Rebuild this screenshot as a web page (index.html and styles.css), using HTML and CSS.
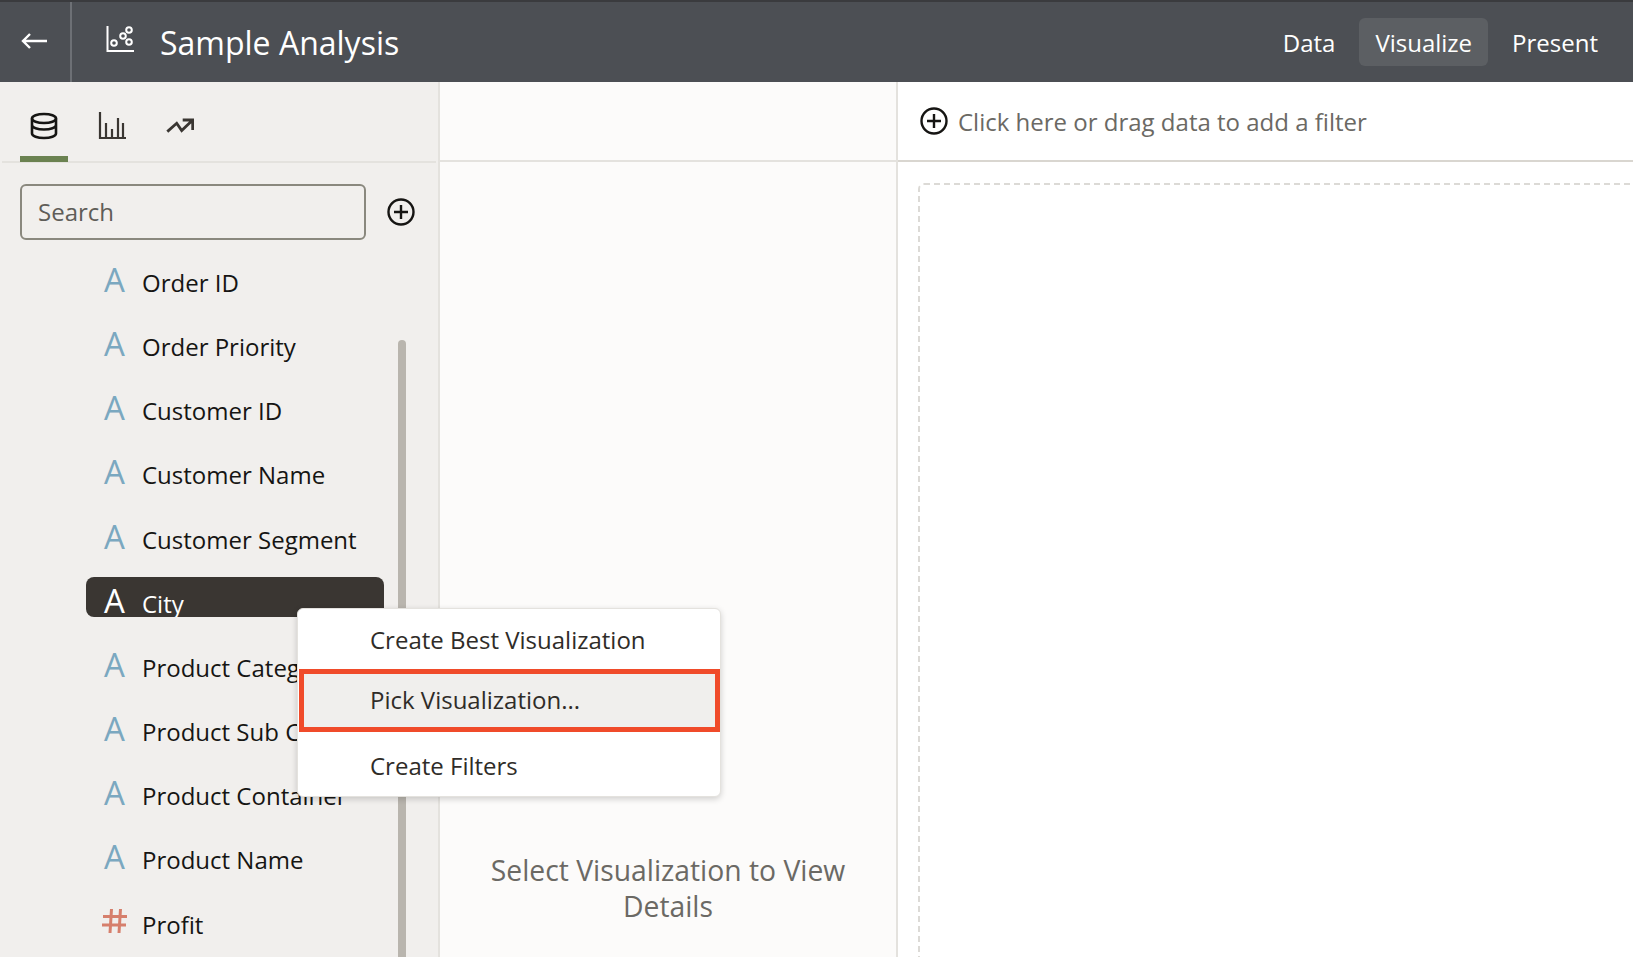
FILE: index.html
```html
<!DOCTYPE html>
<html lang="en">
<head>
  <meta charset="UTF-8" />
  <title>Sample Analysis</title>
  <link rel="stylesheet" href="styles.css">
</head>
<body>

  <header class="topbar">
    <button class="back" aria-label="Back">
      <svg width="28" height="20" viewBox="0 0 28 20" fill="none" stroke="#fff" stroke-width="2.4">
        <path d="M27 10H3M10 3l-7 7 7 7"/>
      </svg>
    </button>
    <svg class="title-icon" width="30" height="28" viewBox="0 0 30 28" fill="none" stroke="#fff" stroke-width="2">
      <path d="M1.500 0v25H28"/>
      <circle cx="8" cy="17" r="2.800"/>
      <circle cx="17" cy="10" r="2.800"/>
      <circle cx="23" cy="4" r="2.800"/>
      <circle cx="23" cy="16" r="2.800"/>
    </svg>
    <h1>Sample Analysis</h1>
    <nav class="modes">
      <a>Data</a>
      <a class="active">Visualize</a>
      <a>Present</a>
    </nav>
  </header>

  <main class="workspace">
    <aside class="sidebar">
      <div class="tabs">
        <div class="tab active">
          <svg width="28" height="28" viewBox="0 0 28 28" fill="none" stroke="#161513" stroke-width="2.600">
            <ellipse cx="14" cy="6.500" rx="12" ry="4.500"/>
            <path d="M2 6.500v15c0 2.600 5.400 4.500 12 4.500s12-1.900 12-4.500v-15M2 13c0 2.600 5.400 4.500 12 4.500s12-1.900 12-4.500"/>
          </svg>
        </div>
        <div class="tab">
          <svg width="28" height="28" viewBox="0 0 28 28" fill="none" stroke="#3a3632" stroke-width="2.200">
            <path d="M2 0v26h26M8 26V11M14 26V17M20 26V6M25 26V11"/>
          </svg>
        </div>
        <div class="tab">
          <svg width="28" height="28" viewBox="0 0 28 28" fill="none" stroke="#3a3632" stroke-width="2.800">
            <path d="M1.300 19.600l9.400-8.300 5 7.300L26.700 8M16.700 8h10v10"/>
          </svg>
        </div>
      </div>

      <div class="search-row">
        <div class="search">Search</div>
        <svg class="plus" width="28" height="28" viewBox="0 0 28 28" fill="none" stroke="#161513" stroke-width="2.400">
          <circle cx="14" cy="14" r="12.500"/>
          <path d="M14 7v14M7 14h14"/>
        </svg>
      </div>

      <ul class="fields">
        <li><span class="type">A</span><span class="name">Order ID</span></li>
        <li><span class="type">A</span><span class="name">Order Priority</span></li>
        <li><span class="type">A</span><span class="name">Customer ID</span></li>
        <li><span class="type">A</span><span class="name">Customer Name</span></li>
        <li><span class="type">A</span><span class="name">Customer Segment</span></li>
        <li class="selected"><span class="type">A</span><span class="name">City</span></li>
        <li><span class="type">A</span><span class="name">Product Category</span></li>
        <li><span class="type">A</span><span class="name">Product Sub Category</span></li>
        <li><span class="type">A</span><span class="name">Product Container</span></li>
        <li><span class="type">A</span><span class="name">Product Name</span></li>
        <li>
          <svg class="type-hash" width="25" height="26" viewBox="0 0 25 26" fill="none" stroke="#d67f6c" stroke-width="3">
            <path d="M9.500 1L8 25M18.500 1L17 25M1 8.500h24M0 17h24"/>
          </svg>
          <span class="name">Profit</span>
        </li>
      </ul>
      <div class="scrollbar"></div>
    </aside>

    <section class="details">
      <div class="details-head"></div>
      <p class="details-hint">Select Visualization to View Details</p>
    </section>

    <section class="canvas">
      <div class="filterbar">
        <svg width="28" height="28" viewBox="0 0 28 28" fill="none" stroke="#161513" stroke-width="2.400">
          <circle cx="14" cy="14" r="12.500"/>
          <path d="M14 7v14M7 14h14"/>
        </svg>
        <span>Click here or drag data to add a filter</span>
      </div>
      <div class="dropzone"></div>
    </section>

    <div class="menu">
      <div class="menu-item">Create Best Visualization</div>
      <div class="menu-item picked">Pick Visualization...</div>
      <div class="menu-item">Create Filters</div>
    </div>
  </main>

</body>
</html>
```

FILE: styles.css
```css
* {
  box-sizing: border-box;
}
html, body {
  height: 100%;
}
body {
  margin: 0;
  overflow: hidden;
  display: flex;
  flex-direction: column;
  font-family: "Open Sans", "Noto Sans", sans-serif;
  color: #161513;
  background: #fff;
}
.topbar {
  flex: none;
  height: 82px;
  display: flex;
  align-items: center;
  background: #4c4f54;
  border-top: 2px solid #3a3b3e;
  color: #fff;
}
.back {
  width: 72px;
  height: 100%;
  padding: 0 0 2px 20px;
  display: flex;
  align-items: center;
  background: none;
  border: none;
  border-right: 2px solid #6d7075;
}
.title-icon {
  margin: 0 0 4px 34px;
}
.topbar h1 {
  margin: 0 0 0 24px;
  font-size: 32px;
  font-weight: 400;
}
.modes {
  margin-left: auto;
  margin-right: 19px;
  display: flex;
  align-items: center;
}
.modes a {
  height: 48px;
  padding: 0 16px;
  display: flex;
  align-items: center;
  font-size: 24px;
  border-radius: 6px;
}
.modes a.active {
  background: #5c5f63;
  margin: 0 8px;
}
.workspace {
  flex: 1;
  min-height: 0;
  position: relative;
  display: flex;
}
.sidebar {
  flex: none;
  width: 440px;
  position: relative;
  overflow: hidden;
  background: #f1efed;
  border-right: 2px solid #e4e2de;
}
.tabs {
  height: 81px;
  margin: 0 2px;
  display: flex;
  padding-left: 18px;
  gap: 20px;
  border-bottom: 2px solid #e4e2de;
}
.tab {
  width: 48px;
  height: 80px;
  display: flex;
  align-items: center;
  justify-content: center;
  padding-top: 8px;
}
.tab.active {
  border-bottom: 6px solid #6b8251;
  padding-top: 14px;
}
.search-row {
  margin: 21px 0 0 20px;
  display: flex;
  align-items: center;
  gap: 21px;
}
.search {
  width: 346px;
  height: 56px;
  padding: 0 0 2px 16px;
  display: flex;
  align-items: center;
  font-size: 24px;
  color: #5f5d58;
  border: 2px solid #8a887e;
  border-radius: 6px;
}
.fields {
  list-style: none;
  margin: 16px 0 0 86px;
  padding: 0;
  width: 298px;
  display: flex;
  flex-direction: column;
  gap: 24.160px;
}
.fields li {
  flex: none;
  height: 40px;
  display: flex;
  gap: 15px;
  padding-left: 16px;
  white-space: nowrap;
  border-radius: 8px;
}
.fields li .type {
  flex: none;
  width: 25px;
  height: 40px;
  font-size: 33px;
  line-height: 40px;
  color: #7ba8c0;
  text-align: center;
  margin-top: 4px;
}
.fields li .type-hash {
  flex: none;
  margin-top: 10px;
}
.fields li .name {
  flex: none;
  font-size: 24px;
  line-height: 32px;
  margin-top: 11px;
}
.fields li.selected {
  background: #3a3632;
  overflow: hidden;
}
.fields li.selected .type, .fields li.selected .name {
  color: #fff;
}
.scrollbar {
  position: absolute;
  left: 398px;
  top: 258px;
  bottom: 0;
  width: 8px;
  border-radius: 4px 4px 0 0;
  background: #b9b5ae;
}
.details {
  flex: none;
  width: 458px;
  display: flex;
  flex-direction: column;
  background: #fcfbfa;
  border-right: 2px solid #e4e2de;
}
.details-head {
  flex: none;
  height: 80px;
  border-bottom: 2px solid #e4e2de;
}
.details-hint {
  margin: auto 40px 33px;
  font-size: 28.300px;
  line-height: 36px;
  text-align: center;
  color: #6b6964;
}
.canvas {
  flex: 1;
  min-width: 0;
  display: flex;
  flex-direction: column;
}
.filterbar {
  flex: none;
  height: 80px;
  padding: 0 0 0 22px;
  display: flex;
  align-items: center;
  gap: 10px;
  font-size: 24px;
  color: #6b6964;
  border-bottom: 2px solid #d9d6d0;
}
.filterbar svg {
  margin-bottom: 1px;
}
.dropzone {
  flex: 1;
  margin: 21px -20px -20px 20px;
  border: 2px dashed #dcdad6;
  border-radius: 6px;
}
.menu {
  position: absolute;
  left: 297px;
  top: 526px;
  width: 424px;
  height: 189px;
  display: flex;
  flex-direction: column;
  background: #fff;
  border: 1px solid #e4e2de;
  border-radius: 6px;
  box-shadow: 0 2px 6px rgba(0, 0, 0, 0.18);
}
.menu-item {
  display: flex;
  align-items: center;
  padding-left: 72px;
  font-size: 24px;
  color: #2f2c28;
}
.menu-item:first-child {
  height: 60px;
}
.menu-item.picked {
  height: 63px;
  background: #f0efed;
  border: 5px solid #f04b2a;
  padding: 0 0 2px 66px;
  margin-left: 1px;
}
.menu-item:last-child {
  flex: 1;
  padding-top: 2px;
}
```
